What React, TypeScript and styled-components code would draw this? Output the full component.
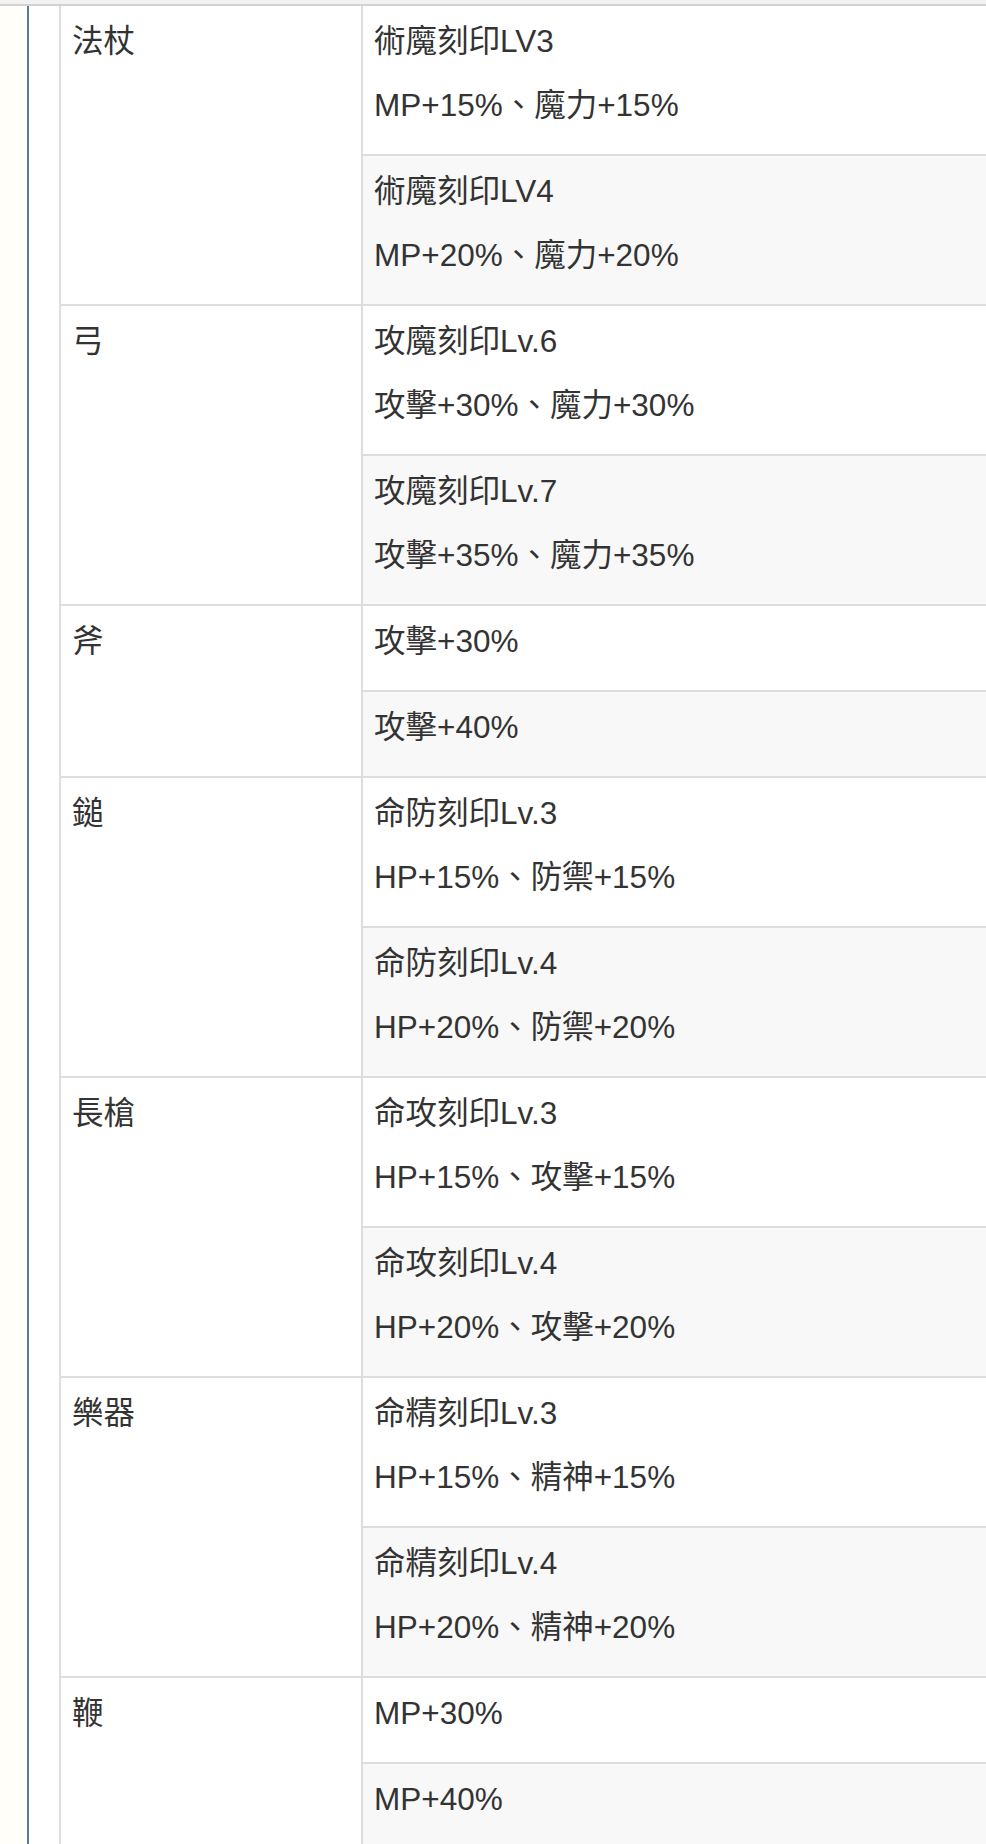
import React, { FC } from "react";
import styled, { createGlobalStyle } from "styled-components";

const GlobalStyle = createGlobalStyle`
  html, body {
    margin: 0;
    padding: 0;
    background: #ffffff;
    overflow: hidden;
  }
  body {
    font-family: "Liberation Sans", "Noto Sans CJK TC", sans-serif;
    color: #333333;
  }
`;

type Group = { name: string; entries: string[][] };

const groups: Group[] = [
    { name: "法杖", entries: [["術魔刻印LV3", "MP+15%、魔力+15%"], ["術魔刻印LV4", "MP+20%、魔力+20%"]] },
    { name: "弓", entries: [["攻魔刻印Lv.6", "攻擊+30%、魔力+30%"], ["攻魔刻印Lv.7", "攻擊+35%、魔力+35%"]] },
    { name: "斧", entries: [["攻擊+30%"], ["攻擊+40%"]] },
    { name: "鎚", entries: [["命防刻印Lv.3", "HP+15%、防禦+15%"], ["命防刻印Lv.4", "HP+20%、防禦+20%"]] },
    { name: "長槍", entries: [["命攻刻印Lv.3", "HP+15%、攻擊+15%"], ["命攻刻印Lv.4", "HP+20%、攻擊+20%"]] },
    { name: "樂器", entries: [["命精刻印Lv.3", "HP+15%、精神+15%"], ["命精刻印Lv.4", "HP+20%、精神+20%"]] },
    { name: "鞭", entries: [["MP+30%"], ["MP+40%"]] },
];

const WeaponTable: FC<{ className?: string }> = ({ className }) => (
    <div className={className}>
        {groups.map(group => (
            <Row key={group.name}>
                <NameCell>
                    <Line>{group.name}</Line>
                </NameCell>
                <Entries>
                    {group.entries.map((lines, i) => (
                        <Entry key={i} $alt={i % 2 === 1}>
                            {lines.map(text => <Line key={text}>{text}</Line>)}
                        </Entry>
                    ))}
                </Entries>
            </Row>
        ))}
    </div>
);

const Table = styled(WeaponTable)`
    width: 1000px;
    border-left: 2px solid #dddddd;
    display: flex;
    flex-direction: column;
    font-size: 31.5px;
`;

const Row = styled.div`
    display: flex;
    border-bottom: 2px solid #dddddd;
`;

const NameCell = styled.div`
    width: 302px;
    flex-shrink: 0;
    box-sizing: border-box;
    padding: 13px 10px 27px 11px;
    border-right: 2px solid #dddddd;
    background: #ffffff;
`;

const Entries = styled.div`
    flex: 1;
    display: flex;
    flex-direction: column;
`;

const Entry = styled.div<{ $alt: boolean }>`
    display: flex;
    flex-direction: column;
    gap: 20px;
    padding: 13px 10px 27px 11px;
    background: ${p => (p.$alt ? "#f8f8f8" : "#ffffff")};
    & + & {
        border-top: 2px solid #dddddd;
    }
`;

const Line = styled.div`
    line-height: 44px;
    white-space: nowrap;
    text-spacing-trim: space-all;
`;

const TopBar = styled.div`
    height: 4px;
    background: #f2f2f2;
    border-bottom: 2px solid #d2d2d2;
`;

const Body = styled.div`
    display: flex;
`;

const Gutter = styled.div`
    width: 27px;
    flex-shrink: 0;
    background: #fffef8;
`;

const Quote = styled.div`
    flex: 1;
    overflow: hidden;
    border-left: 2px solid #5d7a94;
    padding-left: 30px;
`;

export default function App() {
    return (
        <>
            <GlobalStyle />
            <TopBar />
            <Body>
                <Gutter />
                <Quote>
                    <Table />
                </Quote>
            </Body>
        </>
    );
}
